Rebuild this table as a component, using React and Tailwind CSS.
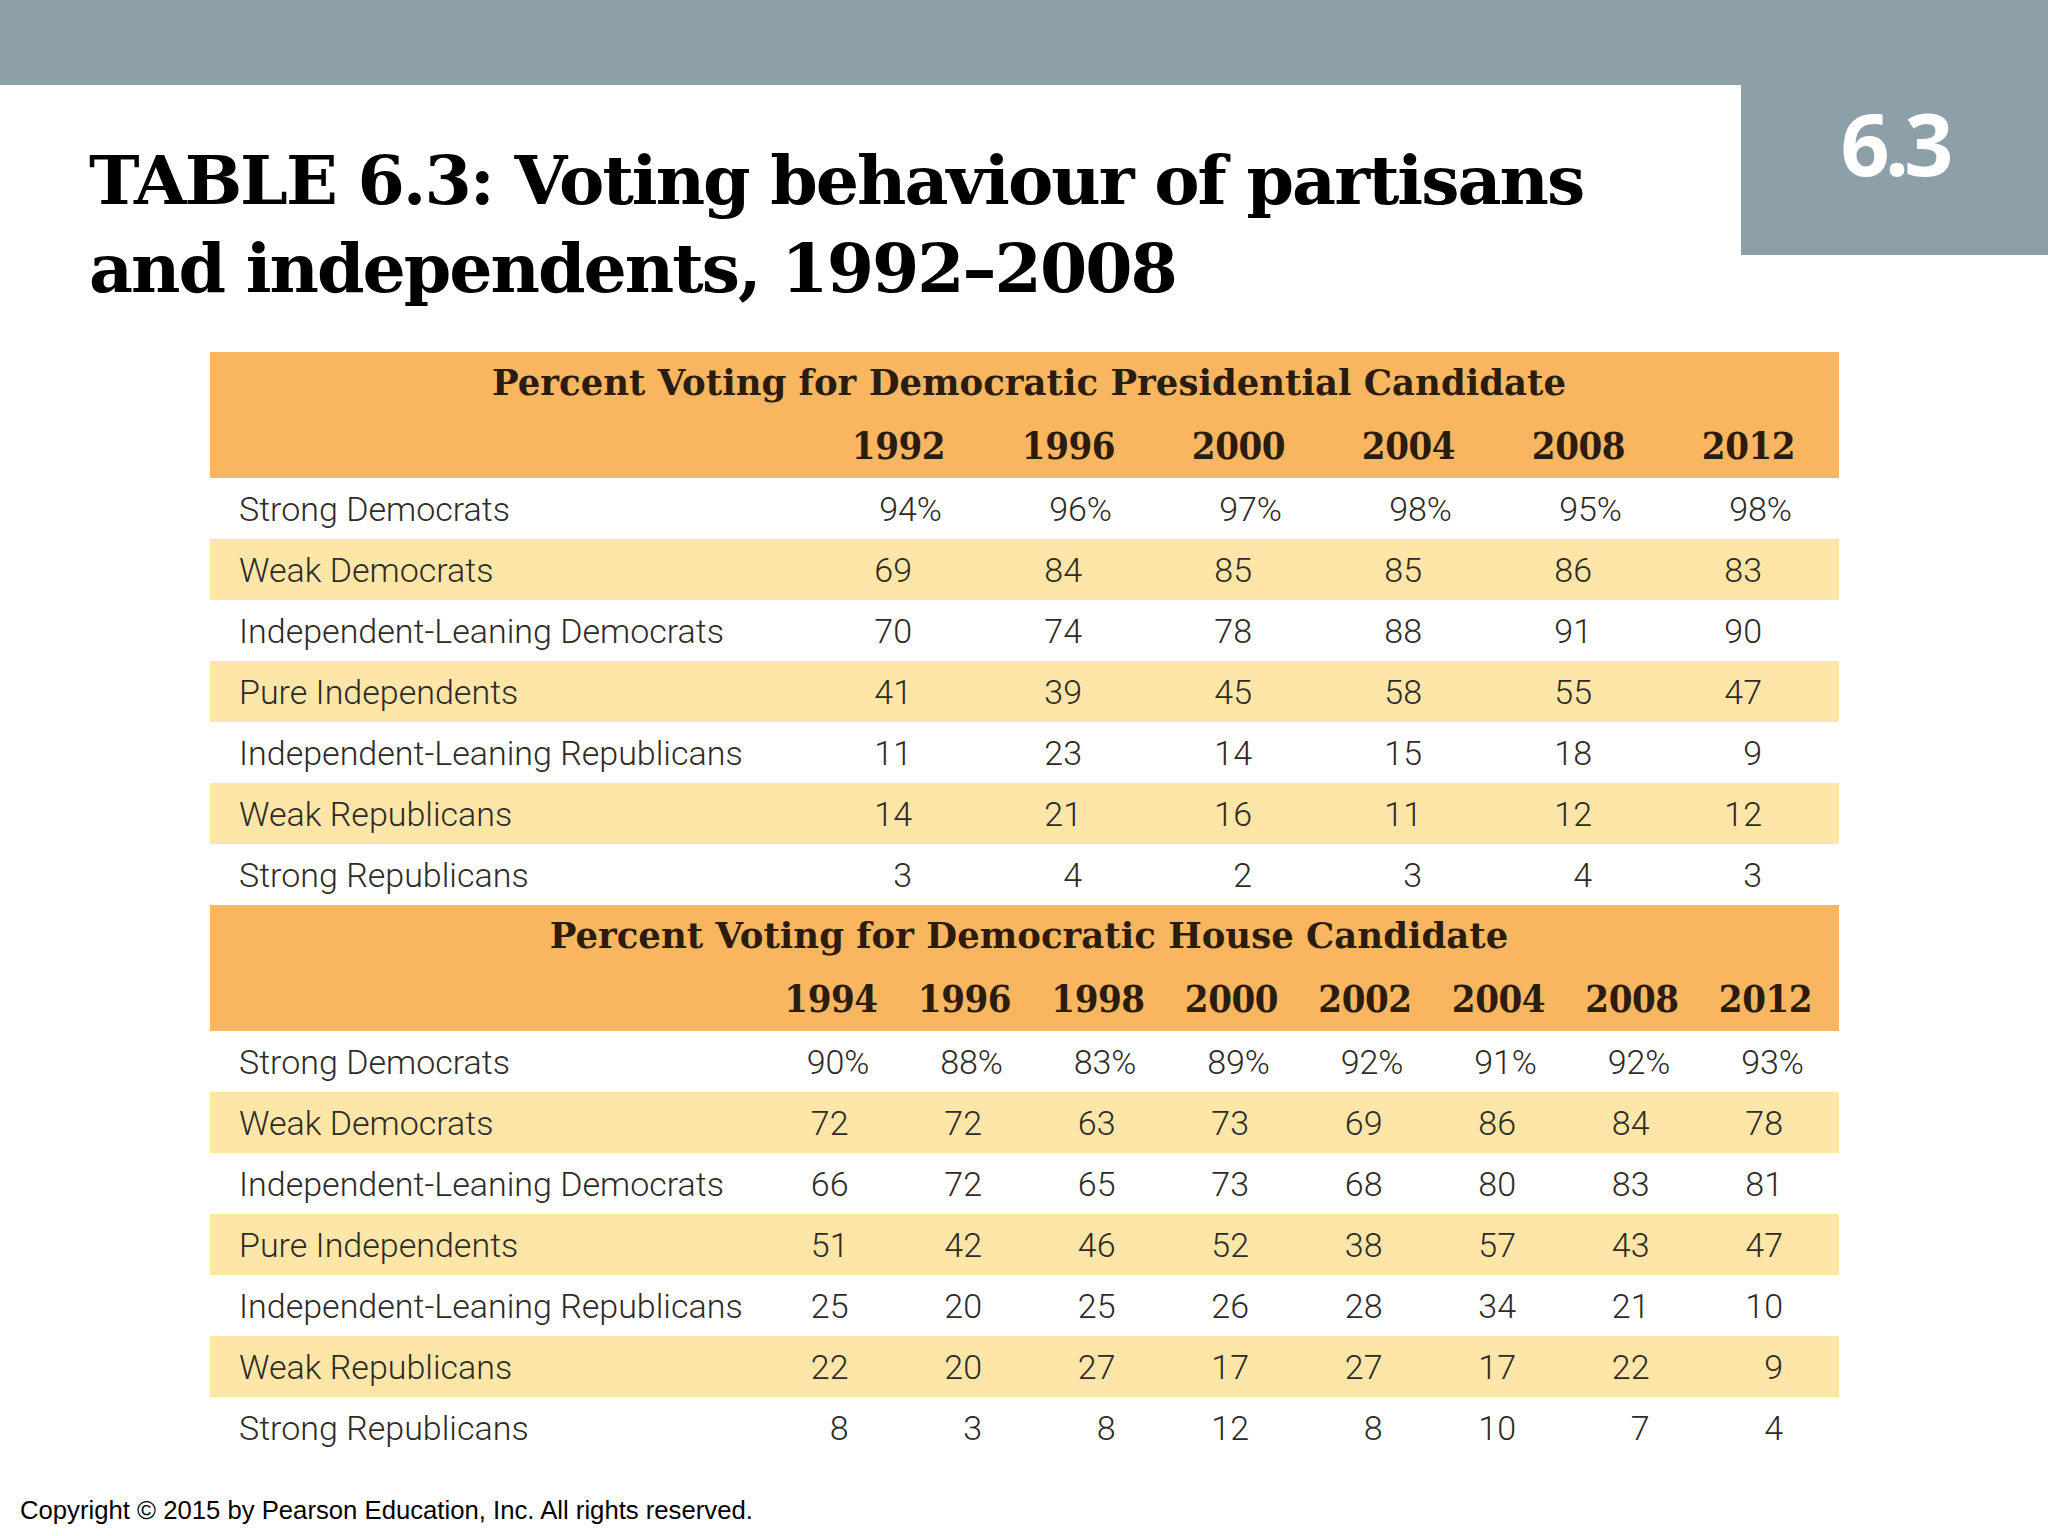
import React from "react";

const sec1 = {
  title: "Percent Voting for Democratic Presidential Candidate",
  years: ["1992", "1996", "2000", "2004", "2008", "2012"],
  rows: [
    ["Strong Democrats", ["94%", "96%", "97%", "98%", "95%", "98%"]],
    ["Weak Democrats", ["69", "84", "85", "85", "86", "83"]],
    ["Independent-Leaning Democrats", ["70", "74", "78", "88", "91", "90"]],
    ["Pure Independents", ["41", "39", "45", "58", "55", "47"]],
    ["Independent-Leaning Republicans", ["11", "23", "14", "15", "18", "9"]],
    ["Weak Republicans", ["14", "21", "16", "11", "12", "12"]],
    ["Strong Republicans", ["3", "4", "2", "3", "4", "3"]],
  ],
};

const sec2 = {
  title: "Percent Voting for Democratic House Candidate",
  years: ["1994", "1996", "1998", "2000", "2002", "2004", "2008", "2012"],
  rows: [
    ["Strong Democrats", ["90%", "88%", "83%", "89%", "92%", "91%", "92%", "93%"]],
    ["Weak Democrats", ["72", "72", "63", "73", "69", "86", "84", "78"]],
    ["Independent-Leaning Democrats", ["66", "72", "65", "73", "68", "80", "83", "81"]],
    ["Pure Independents", ["51", "42", "46", "52", "38", "57", "43", "47"]],
    ["Independent-Leaning Republicans", ["25", "20", "25", "26", "28", "34", "21", "10"]],
    ["Weak Republicans", ["22", "20", "27", "17", "27", "17", "22", "9"]],
    ["Strong Republicans", ["8", "3", "8", "12", "8", "10", "7", "4"]],
  ],
};

const slabCond = { fontFamily: '"DejaVu Serif Condensed", "DejaVu Serif", serif' };
const slab = { fontFamily: '"DejaVu Serif", serif' };
const sans = { fontFamily: 'Roboto, "Liberation Sans", sans-serif' };

function Section({ data, colW, padR, plainPr, pctPr }) {
  return (
    <div className="flex flex-col">
      <div className="bg-[#f9b661] h-[126px] flex flex-col">
        <div
          className="h-[62px] flex items-center justify-center text-[35.5px] font-bold text-[#2a1c0e] pl-[9px]"
          style={slab}
        >
          {data.title}
        </div>
        <div className={`flex h-[64px] items-center ${padR}`}>
          <div className="flex-1" />
          {data.years.map((y) => (
            <div
              key={y}
              className={`${colW} text-right text-[38px] font-bold text-[#2a1c0e] leading-none tracking-[-0.5px]`}
              style={slabCond}
            >
              {y}
            </div>
          ))}
        </div>
      </div>
      {data.rows.map(([label, vals], i) => (
        <div
          key={label}
          className={`flex h-[61px] items-center ${padR} ${i % 2 === 1 ? "bg-[#fde6a8]" : "bg-white"}`}
          style={sans}
        >
          <div className="flex-1 pl-[29px] text-[34px] font-light text-[#2e2a26] leading-none">
            {label}
          </div>
          {vals.map((v, j) => (
            <div
              key={j}
              className={`${colW} text-right text-[34px] font-light text-[#2e2a26] leading-none ${
                v.endsWith("%") ? pctPr : plainPr
              }`}
            >
              {v}
            </div>
          ))}
        </div>
      ))}
    </div>
  );
}

export default function App() {
  return (
    <div className="w-[2048px] h-[1536px] bg-white flex flex-col overflow-hidden">
      <div className="h-[85px] bg-[#8d9fa8] shrink-0" />
      <div className="flex h-[267px] shrink-0">
        <div className="flex-1 pl-[89px] pt-[51px]">
          <h1
            className="text-[68px] font-bold text-black leading-[88px] tracking-[-2px]"
            style={slab}
          >
            TABLE 6.3: Voting behaviour of partisans
            <br />
            and independents, 1992–2008
          </h1>
        </div>
        <div className="w-[307px] h-[170px] bg-[#8d9fa8] flex justify-center pt-[8px]">
          <span
            className="text-[86px] font-bold text-white leading-[100px] tracking-[-5px]"
            style={{ fontFamily: '"Open Sans", sans-serif' }}
          >
            6.3
          </span>
        </div>
      </div>
      <div className="ml-[210px] w-[1629px] flex flex-col">
        <Section data={sec1} colW="w-[170px]" padR="pr-[44px]" plainPr="pr-[33px]" pctPr="pr-[3px]" />
        <Section data={sec2} colW="w-[133.5px]" padR="pr-[27px]" plainPr="pr-[29px]" pctPr="pr-[8px]" />
      </div>
      <div
        className="pl-[20px] pt-[40px] text-[25.7px] text-black leading-none"
        style={{ fontFamily: '"Liberation Sans", Arial, sans-serif' }}
      >
        Copyright © 2015 by Pearson Education, Inc. All rights reserved.
      </div>
    </div>
  );
}
